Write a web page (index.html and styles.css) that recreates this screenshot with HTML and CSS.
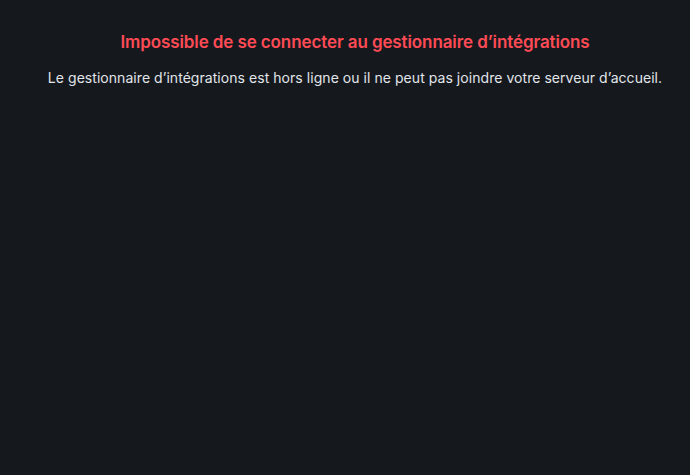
FILE: index.html
```html
<!DOCTYPE html>
<html lang="fr">
<head>
<meta charset="utf-8">
<link rel="stylesheet" href="styles.css">
</head>
<body>
<div class="error">
  <h3 class="title">Impossible de se connecter au gestionnaire d’intégrations</h3>
  <p class="desc">Le gestionnaire d’intégrations est hors ligne ou il ne peut pas joindre votre serveur d’accueil.</p>
</div>
</body>
</html>
```

FILE: styles.css
```css
html, body {
  margin: 0;
  height: 100%;
  background: #15191e;
}
body {
  font-family: Inter, "Noto Sans", sans-serif;
}
.error {
  text-align: center;
  padding: 31px 0 0 20px;
}
.title {
  margin: 0;
  color: #ff4b55;
  font-size: 17px;
  font-weight: 600;
  line-height: 22px;
  letter-spacing: -0.1px;
}
.desc {
  margin: 15px 0 0;
  color: #e1e5ea;
  font-size: 14px;
  line-height: 20px;
  letter-spacing: 0.05px;
}
```
